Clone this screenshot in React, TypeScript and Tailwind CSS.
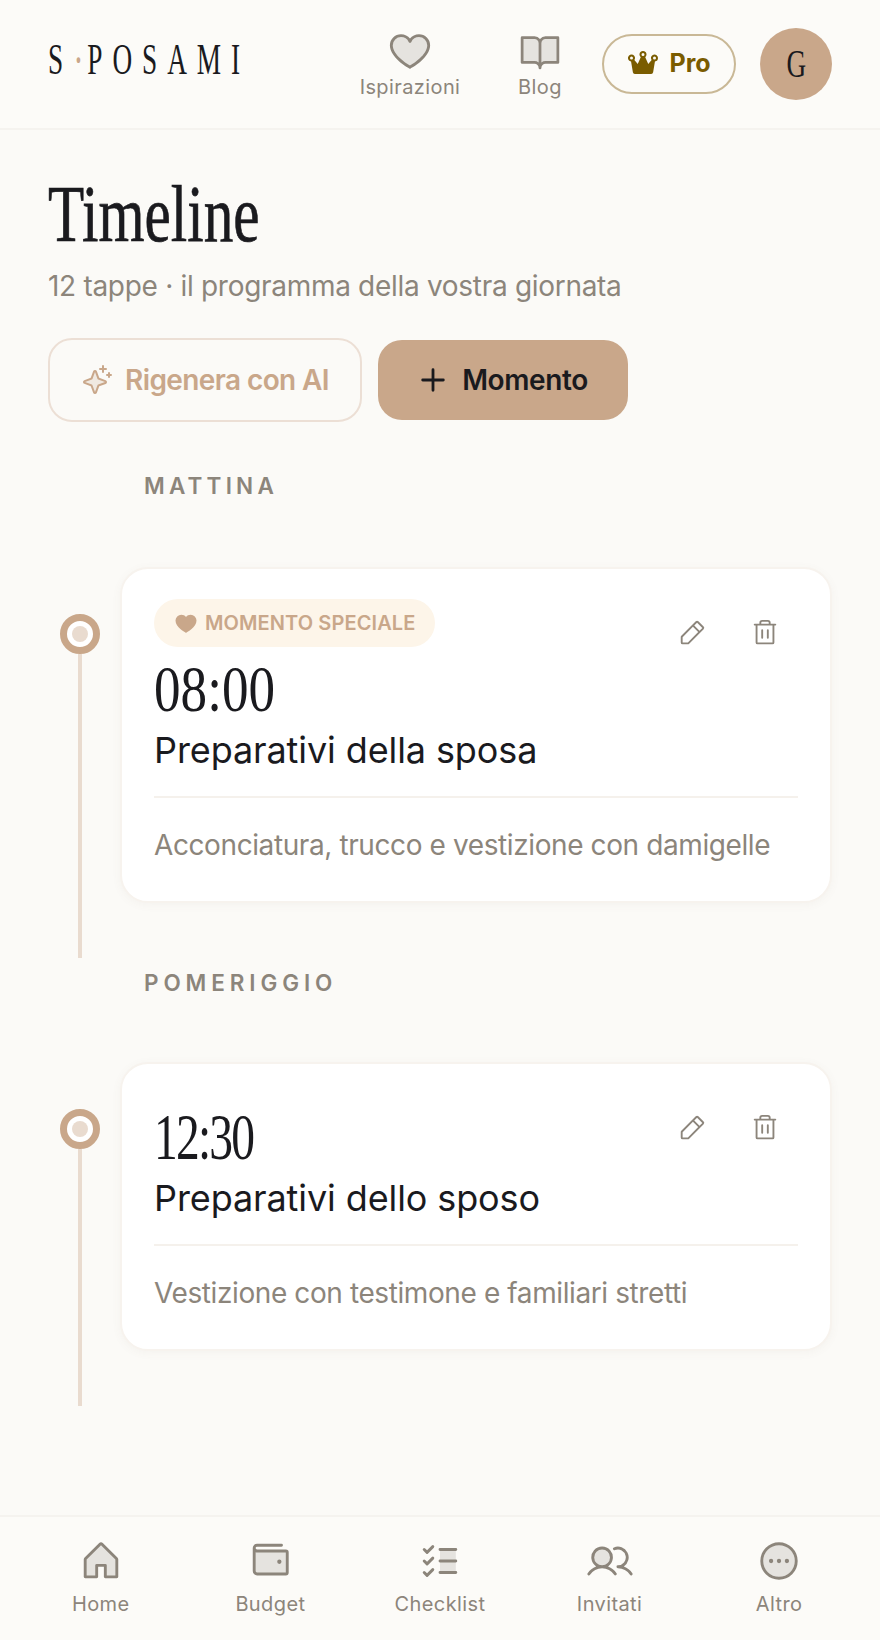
import React from "react";
import {
  PiHeartDuotone, PiBookOpenDuotone, PiCrownFill, PiSparkleDuotone, PiPlusBold, PiHeartFill,
  PiPencilSimple, PiTrash, PiHouseDuotone, PiWalletDuotone, PiListChecksDuotone, PiUsersDuotone, PiDotsThreeCircleDuotone,
} from "react-icons/pi";

const sans = "font-['Inter',sans-serif]";
const serif = "font-['Liberation_Serif',serif]";

function TopLink({ icon, label }: { icon: React.ReactNode; label: string }) {
  return (
    <div className="flex w-[104px] flex-col items-center text-[#8c857b]">
      <div className="flex h-[44px] items-center">{icon}</div>
      <span className="mt-[1px] text-[20px] leading-[28px] tracking-[0.4px]">{label}</span>
    </div>
  );
}

function NavItem({ icon, label }: { icon: React.ReactNode; label: string }) {
  return (
    <div className="flex flex-1 flex-col items-center text-[#8c857b]">
      {icon}
      <span className="mt-[6px] text-[20px] leading-[28px] tracking-[0.4px]">{label}</span>
    </div>
  );
}

function Moment({ time, title, desc, special, rowH, timeClass }: { time: string; title: string; desc: string; special?: boolean; rowH: string; timeClass: string }) {
  return (
    <div className={`flex ${rowH}`}>
      <div className="flex w-[64px] flex-col items-center pt-[47px]">
        <div className="flex h-[40px] w-[40px] items-center justify-center rounded-full border-[7px] border-[#c9a78a] bg-white">
          <div className="h-[16px] w-[16px] rounded-full bg-[#e9dbcf]" />
        </div>
        <div className="w-[4px] flex-1 bg-[#e9dbcf]" />
      </div>
      <div className="ml-[8px] flex h-fit flex-1 flex-col rounded-[28px] border-2 border-[#f7f3ee] bg-white px-[32px] pt-[30px] pb-[34px] shadow-[0_2px_10px_rgba(120,100,80,0.05)]">
        <div className="relative">
          {special && (
            <div className="mb-[6px] flex h-[48px] w-fit items-center gap-[7px] rounded-full bg-[#fdf5e9] px-[20px] text-[#c9a78a]">
              <PiHeartFill size={24} />
              <span className="text-[20px] font-semibold tracking-[0.1px]">MOMENTO SPECIALE</span>
            </div>
          )}
          <div className="absolute top-[19px] right-[18px] flex gap-[43px] text-[#8c857b]">
            <PiPencilSimple size={30} />
            <PiTrash size={30} />
          </div>
          <div className={`${serif} ${timeClass} origin-left text-[66px] leading-[72px] text-[#1a1a1e]`}>{time}</div>
        </div>
        <div className="mt-[1px] text-[36px] leading-[48px] font-normal tracking-[-0.1px] text-[#1a1a1e]">{title}</div>
        <div className="mt-[22px] border-t-2 border-[#f5f1ec] pt-[25px] text-[28px] leading-[44px] tracking-[-0.4px] text-[#8c857b]">{desc}</div>
      </div>
    </div>
  );
}

export default function App() {
  return (
    <div className={`${sans} flex min-h-[1640px] flex-col bg-[#fbfaf7] text-[#1a1a1e]`}>
      <header className="flex h-[130px] items-center justify-between border-b-2 border-[#f5f3ef] bg-[#fcfbf8] px-[48px]">
        <div className={`${serif} -mt-[8px] flex w-[192px] origin-left scale-x-[0.62] items-center text-[44px] leading-[44px] tracking-[16px] whitespace-nowrap`}>
          <span>S</span>
          <span className="w-[23px] shrink-0 -translate-x-[3px] text-center text-[36px] font-bold tracking-normal text-[#c9a78a]">·</span>
          <span>POSAMI</span>
        </div>
        <div className="flex items-center">
          <TopLink icon={<PiHeartDuotone size={46} />} label="Ispirazioni" />
          <div className="w-[26px]" />
          <TopLink icon={<PiBookOpenDuotone size={44} />} label="Blog" />
          <div className="w-[10px]" />
          <div className="flex h-[60px] w-[134px] items-center justify-center gap-[10px] rounded-full border-2 border-[#c9b896] text-[#7a5c00]">
            <PiCrownFill size={32} />
            <span className="text-[25px] font-bold">Pro</span>
          </div>
          <div className={`${serif} ml-[24px] flex h-[72px] w-[72px] items-center justify-center rounded-full bg-[#c9a78a] text-[40px] text-[#1a1a1e]`}>
            <span className="scale-x-[0.68]">G</span>
          </div>
        </div>
      </header>

      <main className="flex-1 pt-[42px] pr-[48px] pl-[48px]">
        <h1 className={`${serif} origin-left scale-x-[0.74] text-[80px] leading-[84px] text-[#1a1a1e] [-webkit-text-stroke:0.7px_#1a1a1e]`}>Timeline</h1>
        <p className="mt-[10px] text-[28px] leading-[40px] tracking-[-0.3px] text-[#8c857b]">12 tappe · il programma della vostra giornata</p>
        <div className="mt-[32px] flex items-center gap-[16px]">
          <div className="flex h-[84px] w-[314px] items-center justify-center gap-[12px] rounded-[24px] border-2 border-[#ecdfd5] text-[#c9a78a]">
            <PiSparkleDuotone size={32} />
            <span className="text-[28px] font-semibold tracking-[-0.6px]">Rigenera con AI</span>
          </div>
          <div className="flex h-[80px] w-[250px] items-center justify-center gap-[14px] rounded-[24px] bg-[#c9a78a] text-[#1a1a1e]">
            <PiPlusBold size={30} />
            <span className="text-[28px] font-semibold tracking-[-0.4px]">Momento</span>
          </div>
        </div>
        <div className="mt-[50px] pl-[96px] text-[22.5px] leading-[28px] font-semibold tracking-[4.2px] text-[#8c857b]">MATTINA</div>
        <div className="mt-[67px]">
          <Moment rowH="h-[391px]" special timeClass="scale-x-[0.805]" time="08:00" title="Preparativi della sposa" desc="Acconciatura, trucco e vestizione con damigelle" />
        </div>
        <div className="mt-[11px] pl-[96px] text-[22.5px] leading-[28px] font-semibold tracking-[4.9px] text-[#8c857b]">POMERIGGIO</div>
        <div className="mt-[65px]">
          <Moment rowH="h-[344px]" timeClass="mt-[7px] scale-x-[0.72] tracking-[-2.5px]" time="12:30" title="Preparativi dello sposo" desc="Vestizione con testimone e familiari stretti" />
        </div>
      </main>

      <nav className="flex h-[125px] border-t-2 border-[#f5f3ef] bg-[#fcfbf8] px-[16px] pt-[21px]">
        <NavItem icon={<PiHouseDuotone size={46} />} label="Home" />
        <NavItem icon={<PiWalletDuotone size={46} />} label="Budget" />
        <NavItem icon={<PiListChecksDuotone size={46} />} label="Checklist" />
        <NavItem icon={<PiUsersDuotone size={46} />} label="Invitati" />
        <NavItem icon={<PiDotsThreeCircleDuotone size={46} />} label="Altro" />
      </nav>
    </div>
  );
}
